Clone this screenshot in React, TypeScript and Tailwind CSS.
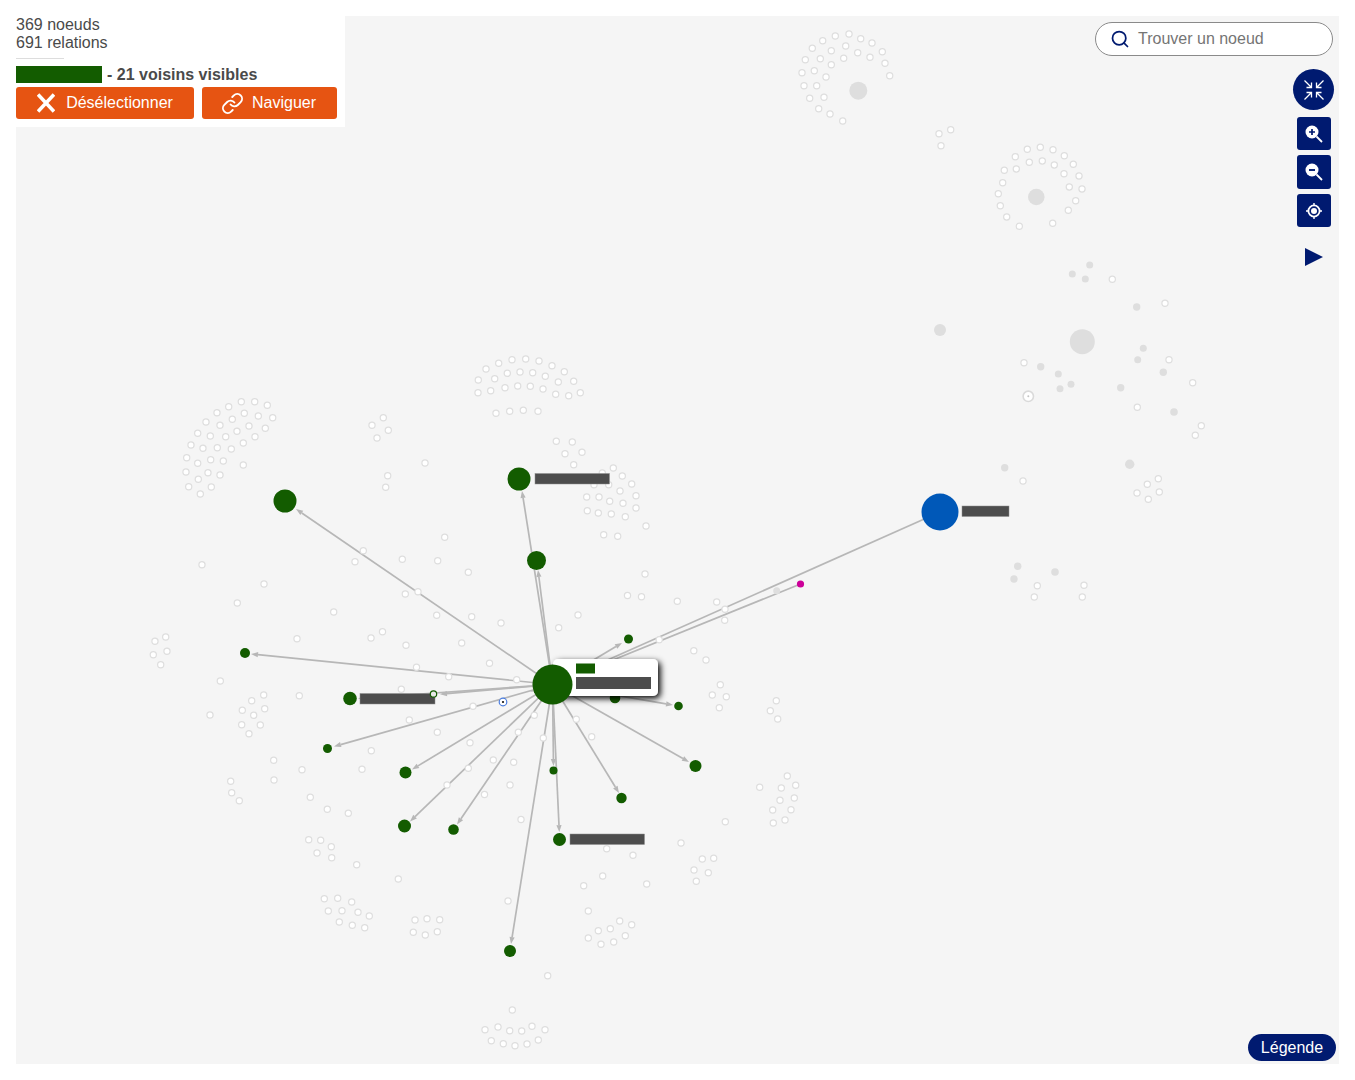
import { Search, Link } from "lucide-react";

const C = 552.5;
const D = 684.5;
const GREEN = "#135c00";
const EDGE = "#b7b7b7";

const faded: [number, number][] = [
  [241.3,401.7],[254.7,401.7],[267.3,405.3],[228.7,406.7],[217,412.7],[244.3,413.3],[258.3,416],[272.7,417.7],[206,422],[232.3,419.3],[220,425.3],[249,426],[265.3,428.3],[237,431.3],[197.7,433.3],[210.3,436],[225.7,436.7],[255,436.7],[243.3,443],[191,445],[203,448.3],[217.3,447.7],[231.3,449],[186.7,457.7],[210.7,459.7],[223.3,461],[197.7,463.3],[243.3,465],[186,472],[208,472.7],[220,475],[198.3,479.3],[188.7,486.7],[211.3,487],[200.3,494],
  [383.3,417.7],[372,425.3],[388.3,430.3],[377,438],[425,463],[387.7,475.7],[385.7,487.3],
  [486,369],[498.7,363.3],[512,359.7],[525.7,359],[539,361],[552,365.7],[564.3,371.7],[478.3,380],[494.7,378.7],[507.3,373.3],[520,372],[532.7,372.7],[545.3,376.3],[558.3,382],[573.7,381.3],[478,392.7],[490.7,390.7],[505,387.7],[517.7,386],[530.3,386.3],[543,389],[555.7,394.3],[568.7,395.7],[580.3,392.7],[496,413.3],[509.7,411.3],[523.3,410.3],[538,411.3],
  [556.3,441.3],[572.3,442],[565,453.7],[582,452.3],[573.7,464.7],[613.3,468],[602.3,473],[622.3,476],[631.7,484],[594,484.7],[608.7,484.7],[620,491],[636,495.7],[586.7,497],[599,497],[609.7,501.3],[623,503.3],[636,508],[587.3,510.7],[598.3,513],[611.3,514],[625.3,516.7],[646,526],[603.7,534.7],[617.7,536.3],[444.7,537.3],[468.3,572.3],[645,574],
  [849,34],[835.3,36],[860.7,38.7],[822.7,40.7],[872,43],[812.3,48.3],[845.7,46],[882.3,51.7],[831.3,50.7],[857.7,52.7],[805.3,59.7],[820.3,58.7],[843.7,58.3],[870,57.3],[885,63.3],[831.3,64.7],[802,72.7],[814.3,70.7],[889.7,75.7],[826,77],[804,85.7],[816.7,85.7],[809.7,98.3],[824,97.3],[818.7,108.7],[830,114],[842.7,121],
  [950.7,129.7],[939,133.7],[941,145.7],
  [1040.3,147.3],[1027.3,149.3],[1053,149.7],[1064.3,155.7],[1015.3,156.7],[1042.3,161],[1029.3,162.3],[1054.3,165],[1073.3,164.3],[1016.3,169],[1004.3,170.3],[1064,173.7],[1079,176],[1002.7,182.7],[1069.3,187],[1082,189],[998.3,193.7],[1075.7,200.7],[1000.3,205.7],[1068.3,210.3],[1006.7,217],[1052.7,223.3],[1019.3,226.3],
  [1112.3,279.3],[1165,303.3],[1024,362.7],[1169,359.7],[1192.7,382.7],[1137.3,407.3],[1201.3,425.7],[1195.3,435.3],[1023,481],[1158.3,478.7],[1147.3,484.3],[1137,493],[1159.3,492],[1148.3,499.3],[1037.3,585.7],[1084,585.3],[1034.3,597],[1082.3,597],
  [202,564.7],[264,584],[237.3,603],[333.7,612],[297,638.7],[371,638],[382.5,631.7],[406,645.3],[155,641.3],[165.7,637],[167,651.3],[153.3,654.7],[160.7,664.7],[220.3,681],[416.5,667.2],[401.3,689.3],[299.3,695.7],[263.7,695],[251.7,700.7],[264.7,708.7],[242.3,710.3],[253.7,715.3],[241.7,724.7],[260.3,725],[249,733.7],[210,715],[409.3,720],[437.3,732.2],[371.3,750.7],[273.7,760.3],[302,769.7],[274,780],[362,769.3],[230.7,781.3],[231.7,792.7],[239.3,800.7],[310.3,797.3],[327.3,809.3],[348.3,813.3],
  [363.3,550.7],[355,561.7],[402.3,559.3],[437.7,560.7],[405.3,594],[418,591.7],[436.7,615.3],[471.7,616.7],[501,623],[558.7,627.7],[461.7,643],[489.5,663.3],[448.7,676.7],[516.7,679.8],
  [693.8,650.7],[659.2,639.8],[473,706.3],[534.3,715.3],[576.3,719.3],[518.3,732.3],[591.7,736.7],[543.3,738],[470,742.7],[493.3,760],[513.7,762.3],[468.3,768.3],[510,785],[484.5,794.5],[447,785],[521,819.5],
  [627.5,595.5],[641.5,596.7],[578,615],[677.3,601.3],[716.7,602],[725,609.3],[724.7,620.3],[706,660],[720.3,684.7],[712.3,695],[726.3,696.7],[719.3,707.7],[776.3,700.7],[770.3,710.7],[777.7,719],[787.3,776],[795.7,785.3],[781.3,788],[759.7,787.3],[780,800.3],[794.3,798],[791,809.7],[772.7,810],[785,820],[773.3,823],[725.3,821.7],[681,843],[702.3,859],[713.7,858.3],[694,870],[708.3,872.7],[696.3,881.3],[646.7,884],
  [308.7,839.7],[320.7,840.3],[331.3,846.7],[317,853],[331.7,857.7],[356.7,864.7],[398.3,879],[324.3,898.7],[337.7,898.3],[351.7,902],[328.3,911],[342,910.7],[358,912.3],[369.3,916],[339.3,922],[352.3,925.3],[364.7,927.7],[415,920],[427,918.7],[439.7,919.7],[413.3,932.3],[425.3,935],[437.3,931.7],[508,901],[547.7,975.7],[512.3,1010],[485,1029.7],[498,1027],[509.7,1030.7],[521.7,1031],[532,1026.3],[545,1029.7],[491.3,1040.7],[503.3,1043.7],[515,1045.7],[527,1044],[538.3,1040],
  [606.7,848.7],[633,855.3],[602.7,876],[583.7,885.7],[588.3,911],[619.7,921],[631.7,924.7],[598.3,930.7],[610.3,928.7],[625.3,935.7],[588.3,938],[613.7,942],[601,944.3],
];

const grey: [number, number, number][] = [
  [858.3,90.7,9],[1036.3,197,8.3],[1089.7,265,3.5],[1072.3,274,3.5],[1085.3,279,3.5],[1136.7,307,3.7],[940,330,6],[1082.3,341.7,12.5],[1143.3,348.3,3.5],[1137.7,359.7,3.5],[1040.7,366.7,3.7],[1058.3,374,3.5],[1163.3,372.3,3.7],[1071,384.3,3.5],[1060,388.7,3.5],[1120.7,387.7,3.7],[1174,412,3.8],[1004.7,467.7,3.7],[1129.7,464.3,4.7],[1017.7,566.3,3.7],[1014,579,3.7],[1055,572,3.8],[776.7,590.7,3.5],
];

// tip of the arrow on each relation starting at the central node
const arrows: [number, number][] = [
  [296,509],[522,491],[538,570],[622,643],[251,654],[358,698.5],[440,694.3],[334,746.5],[412,769.5],[410,821.5],[457,824.5],[553.5,766],[559.3,832],[511,944],[619,793],[689,762],[673,705],[530.5,691.5],
];

const greens: [number, number, number][] = [
  [285,501,11.5],[519,479,11.5],[536.5,560.5,9.5],[628.5,639,4.5],[245,653,5],[350,698.5,6.8],[327.5,748.5,4.5],[405.5,772.5,6],[404.5,826,6.5],[453.5,829.5,5.3],[553.5,770.5,4],[559.5,839.5,6.5],[510,951,6],[621.5,798,5.2],[695.5,766,6],[678.5,706,4.3],[615,698,5.3],
];

const labels: [number, number, number][] = [
  [535,473.5,74.5],[360,693.5,75],[570,834,74.5],[962,506,47],
];

function Arrow({ x, y }: { x: number; y: number }) {
  const d = Math.hypot(x - C, y - D);
  const ux = (x - C) / d;
  const uy = (y - D) / d;
  const bx = x - ux * 7;
  const by = y - uy * 7;
  const px = -uy * 2.6;
  const py = ux * 2.6;
  return (
    <g>
      <line x1={C} y1={D} x2={bx} y2={by} stroke={EDGE} strokeWidth={1.7} />
      <polygon points={`${x},${y} ${bx + px},${by + py} ${bx - px},${by - py}`} fill={EDGE} />
    </g>
  );
}

function Graph() {
  return (
    <svg className="absolute inset-0 w-full h-full" viewBox="16 16 1323 1048">
      <defs>
        <filter id="tip" x="-30%" y="-50%" width="160%" height="220%">
          <feDropShadow dx="2.5" dy="2.5" stdDeviation="3" floodColor="#000" floodOpacity="1" />
        </filter>
      </defs>
      <line x1={C} y1={D} x2={940} y2={512} stroke={EDGE} strokeWidth={1.7} />
      <line x1={C} y1={D} x2={800.5} y2={584} stroke={EDGE} strokeWidth={1.7} />
      {arrows.map(([x, y]) => (
        <Arrow key={`${x}-${y}`} x={x} y={y} />
      ))}
      {grey.map(([x, y, r]) => (
        <circle key={`${x}-${y}`} cx={x} cy={y} r={r} fill="#dedede" />
      ))}
      {faded.map(([x, y], i) => (
        <circle key={i} cx={x} cy={y} r={3.1} fill="#ffffff" stroke="#dedede" strokeWidth={1.2} />
      ))}
      <circle cx={1028.3} cy={396.3} r={5.2} fill="#ffffff" stroke="#dadada" strokeWidth={1.6} />
      <circle cx={1028.3} cy={396.3} r={1} fill="#c4c4c4" />
      {greens.map(([x, y, r]) => (
        <circle key={`${x}-${y}`} cx={x} cy={y} r={r} fill={GREEN} />
      ))}
      <circle cx={800.5} cy={584} r={3.6} fill="#cc0099" />
      <circle cx={940} cy={512} r={18.5} fill="#0058b8" />
      {labels.map(([x, y, w]) => (
        <rect key={x} x={x} y={y} width={w} height={10.5} fill="#4d4d4d" stroke="#8f8f8f" strokeWidth={0.5} />
      ))}
      <circle cx={433.5} cy={694} r={3.2} fill="#e8e8e8" stroke={GREEN} strokeWidth={1.2} />
      <circle cx={503} cy={702} r={3.8} fill="#ffffff" stroke="#4a7de0" strokeWidth={1.2} />
      <circle cx={503} cy={702} r={1.1} fill="#111111" />
      <rect x={553} y={659} width={105} height={37} rx={5} fill="#ffffff" filter="url(#tip)" />
      <rect x={576} y={663.5} width={19} height={10} fill={GREEN} />
      <rect x={576} y={677} width={75} height={12} fill="#4d4d4d" />
      <circle cx={C} cy={D} r={20} fill={GREEN} />
    </svg>
  );
}

function Panel() {
  return (
    <div className="absolute left-[-16px] top-[-16px] w-[345px] h-[127px] bg-white pl-4 pt-4 text-base leading-[18px] text-[#4a4a4a]">
      <div>369 noeuds</div>
      <div>691 relations</div>
      <div className="mt-[6px] h-px w-12 bg-[#dddddd]" />
      <div className="mt-[7px] flex items-center h-[17px] font-bold">
        <span className="w-[86px] h-[17px] bg-[#135c00]" />
        <span className="ml-[5px]">- 21 voisins visibles</span>
      </div>
      <div className="mt-1 flex gap-2">
        <button className="flex h-8 w-[178px] items-center justify-center gap-[11px] rounded-[3px] bg-[#e65412] text-white">
          <svg width="18" height="20" viewBox="0 0 18 20">
            <path d="M1 1.5 L17 18.5 M17 1.5 L1 18.5" stroke="#fff" strokeWidth="3.6" fill="none" />
          </svg>
          <span>Désélectionner</span>
        </button>
        <button className="flex h-8 w-[135px] items-center justify-start gap-[8px] rounded-[3px] bg-[#e65412] pl-[19px] text-white">
          <Link size={23} strokeWidth={2} />
          <span>Naviguer</span>
        </button>
      </div>
    </div>
  );
}

function SquareButton({ children, tall }: { children: React.ReactNode; tall?: boolean }) {
  return (
    <div className={tall ? "flex h-[34px] w-[34px] items-center justify-center rounded-[3px] bg-[#001a70]" : "flex h-[33px] w-[34px] items-center justify-center rounded-[3px] bg-[#001a70]"}>
      {children}
    </div>
  );
}

function Controls() {
  return (
    <div className="absolute right-[5px] top-[53px] flex w-[41px] flex-col items-center">
      <div className="flex h-[41px] w-[41px] items-center justify-center rounded-full bg-[#001a70]">
        <svg width="22" height="22" viewBox="0 0 22 22" fill="none" stroke="#fff" strokeWidth="1.3">
          <path d="M1.5 1.5 L8.5 8.5 M8.5 3.5 V8.5 H3.5" />
          <path d="M20.5 1.5 L13.5 8.5 M13.5 3.5 V8.5 H18.5" />
          <path d="M1.5 20.5 L8.5 13.5 M8.5 18.5 V13.5 H3.5" />
          <path d="M20.5 20.5 L13.5 13.5 M13.5 18.5 V13.5 H18.5" />
        </svg>
      </div>
      <div className="mt-[7px]">
        <SquareButton>
          <svg width="20" height="20" viewBox="0 0 20 20">
            <circle cx="8" cy="8" r="6.5" fill="#fff" />
            <path d="M12.5 12.5 L18 18" stroke="#fff" strokeWidth="1.8" />
            <path d="M5 8 H11 M8 5 V11" stroke="#001a70" strokeWidth="1.7" />
          </svg>
        </SquareButton>
      </div>
      <div className="mt-[5px]">
        <SquareButton tall>
          <svg width="20" height="20" viewBox="0 0 20 20">
            <circle cx="8" cy="8" r="6.5" fill="#fff" />
            <path d="M12.5 12.5 L18 18" stroke="#fff" strokeWidth="1.8" />
            <path d="M5 8 H11" stroke="#001a70" strokeWidth="1.9" />
          </svg>
        </SquareButton>
      </div>
      <div className="mt-[5px]">
        <SquareButton>
          <svg width="18" height="18" viewBox="0 0 18 18" fill="none">
            <circle cx="9" cy="9" r="5.6" stroke="#fff" strokeWidth="1.8" />
            <circle cx="9" cy="9" r="3" fill="#fff" />
            <path d="M9 1 V3.5 M9 14.5 V17 M1 9 H3.5 M14.5 9 H17" stroke="#fff" strokeWidth="1.4" />
          </svg>
        </SquareButton>
      </div>
      <svg className="mt-[21px]" width="18" height="18" viewBox="0 0 18 18">
        <polygon points="0,0 18,9 0,18" fill="#001a70" />
      </svg>
    </div>
  );
}

export default function App() {
  return (
    <div className="h-[1080px] w-full bg-white p-4 font-['Liberation_Sans',Arial,sans-serif]">
      <div className="relative h-[1048px] w-[1323px] bg-[#f5f5f5]">
        <Graph />
        <Panel />
        <div className="absolute right-[6px] top-[6px] flex h-[34px] w-[238px] items-center rounded-full border border-[#8a8a8a] bg-white pl-[14px] text-base text-[#757575]">
          <Search size={20} color="#001a70" strokeWidth={2.1} />
          <span className="ml-[8px]">Trouver un noeud</span>
        </div>
        <Controls />
        <div className="absolute bottom-[3px] right-[3px] flex h-[27px] w-[88px] items-center justify-center rounded-full bg-[#001a70] text-base text-white">
          Légende
        </div>
      </div>
    </div>
  );
}
